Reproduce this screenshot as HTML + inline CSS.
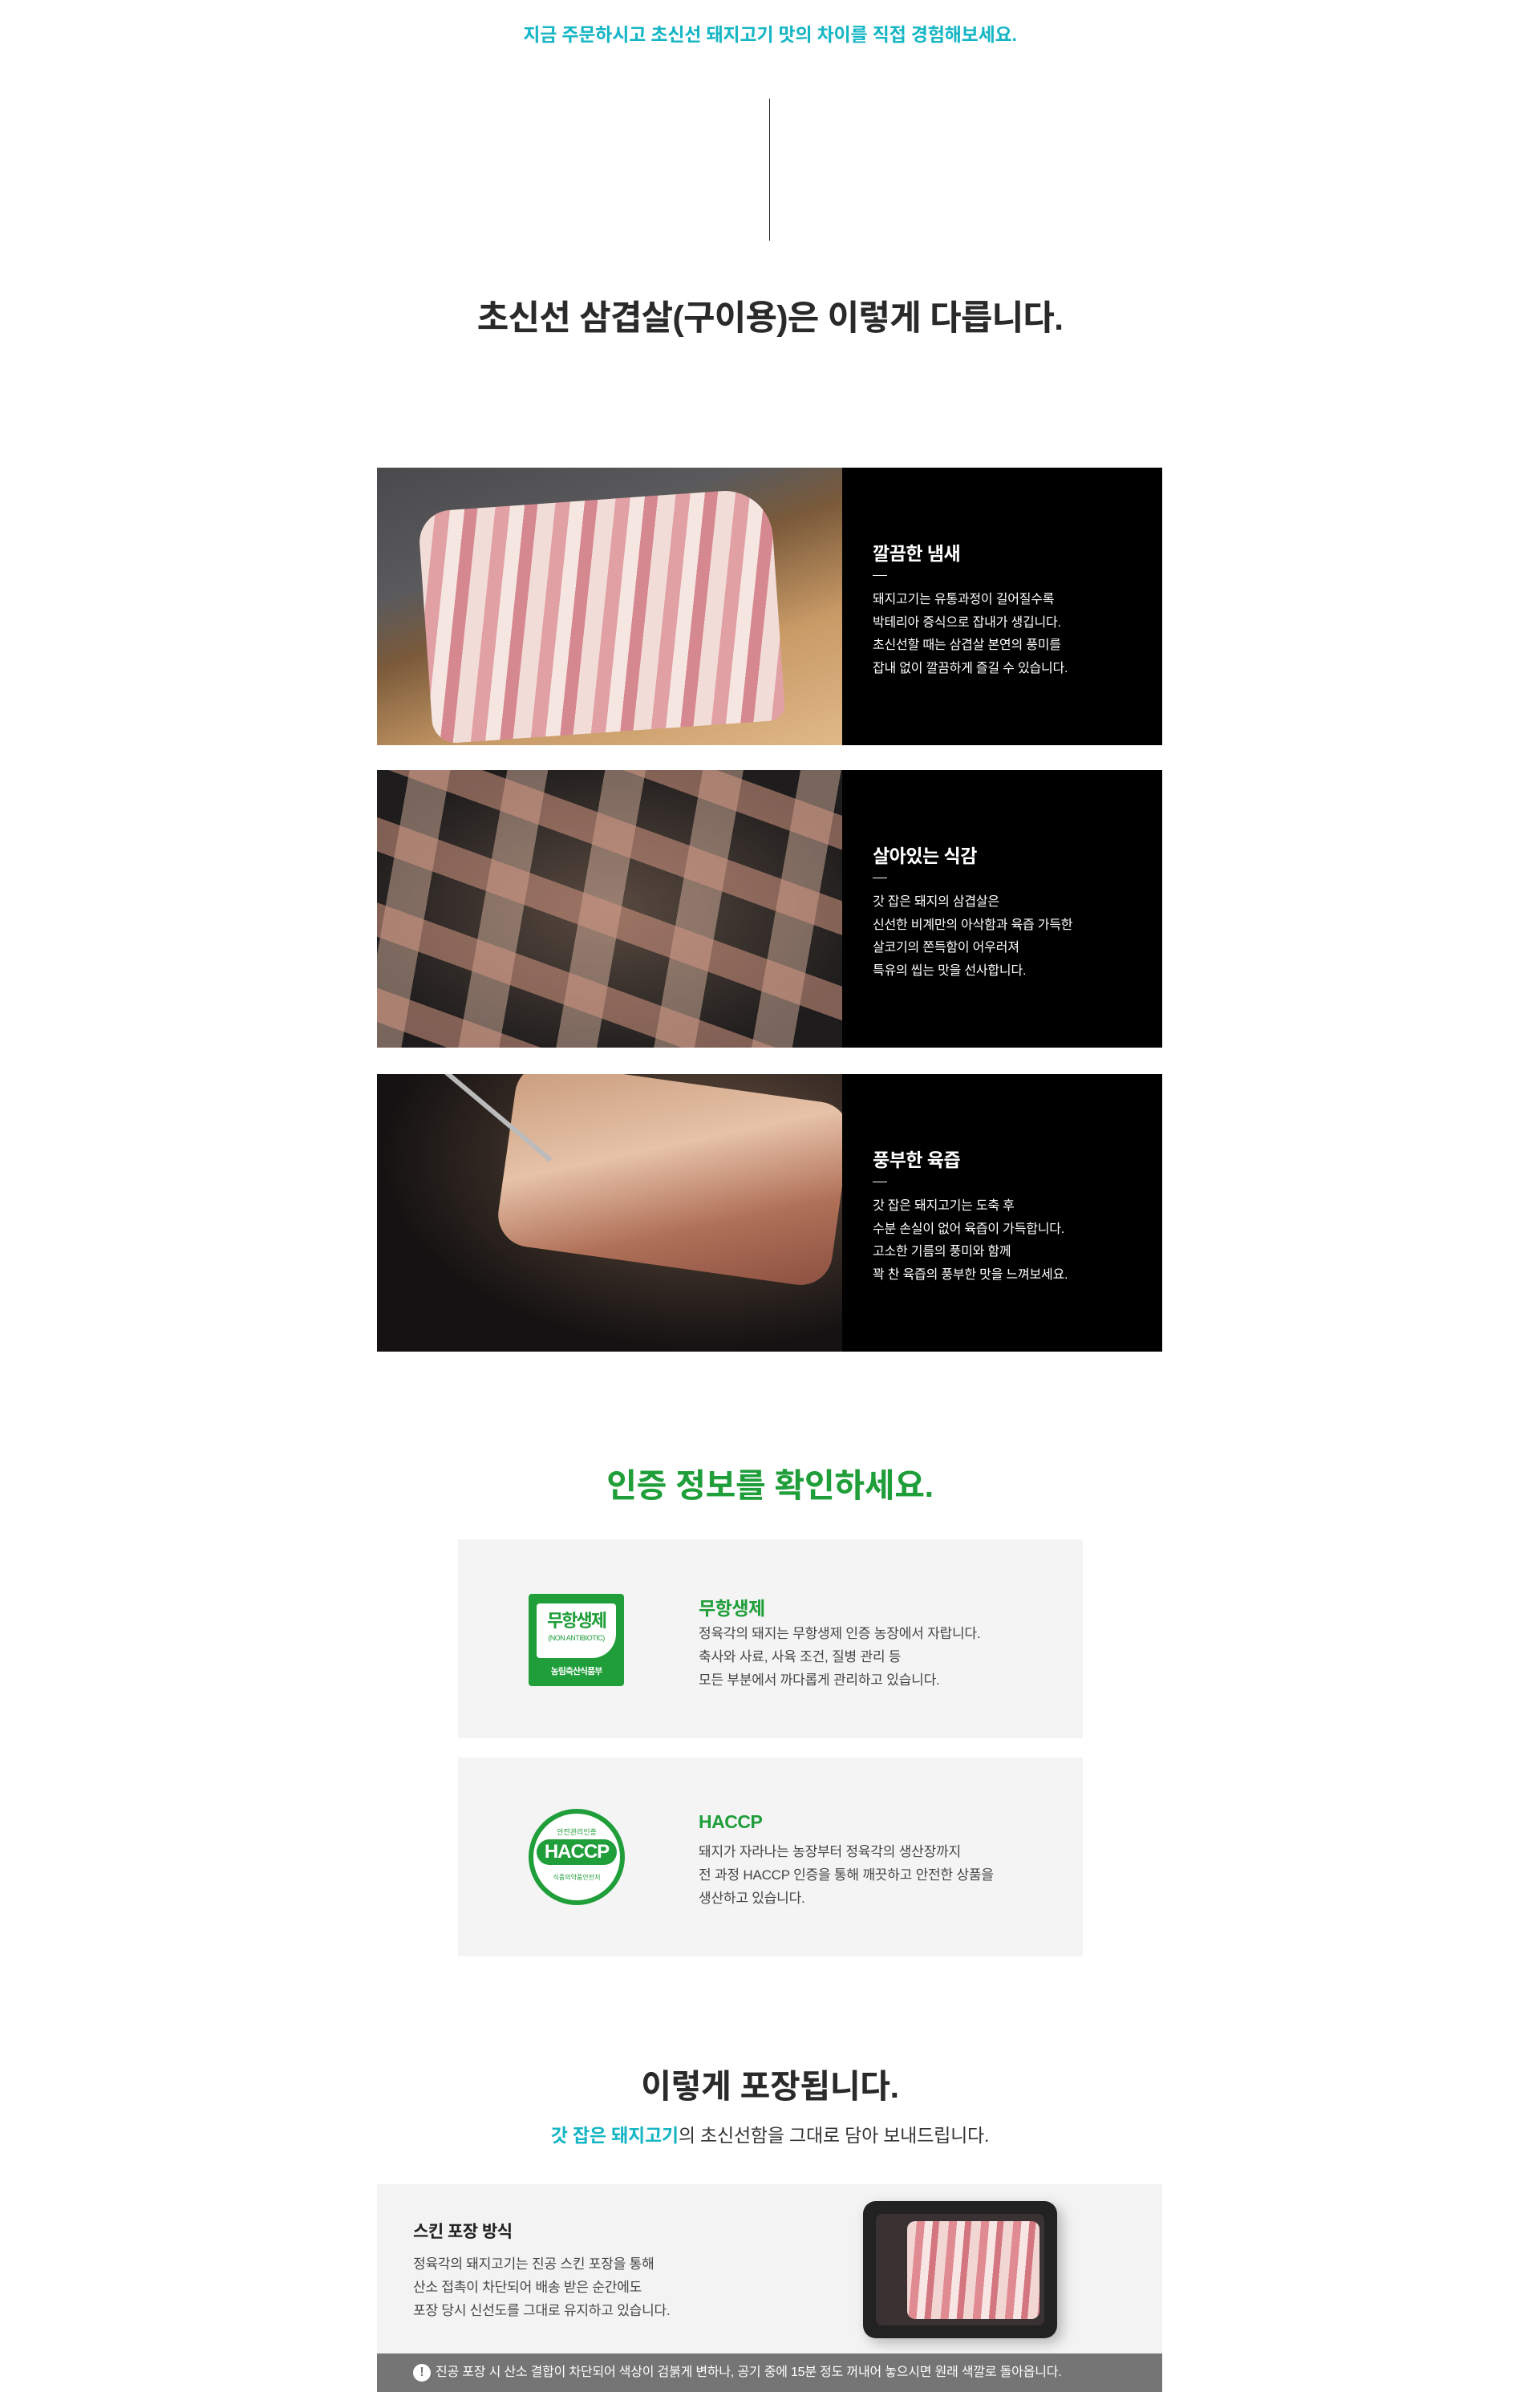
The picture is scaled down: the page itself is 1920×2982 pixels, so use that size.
<!DOCTYPE html>
<html><head><meta charset="utf-8"><style>
*{margin:0;padding:0;box-sizing:border-box}
body{width:1920px;height:2982px;background:#fff;font-family:"Liberation Sans","Noto Sans CJK KR",sans-serif;position:relative;overflow:hidden;color:#222}
.abs{position:absolute}
.c{left:0;width:1920px;text-align:center}
.row{position:absolute;left:470px;width:979px;height:346px;background:#000}
.ph{position:absolute;left:0;top:0;width:580px;height:346px;overflow:hidden}
.tx{position:absolute;left:618px;top:0;color:#fff}
.tx h3{position:absolute;top:88px;font-size:23px;font-weight:bold;white-space:nowrap;letter-spacing:-.5px}
.tx i{position:absolute;top:134px;left:0;width:18px;height:1px;background:#fff}
.tx p{position:absolute;top:151px;font-size:16px;line-height:28.5px;white-space:nowrap;letter-spacing:-.2px}
.cert{position:absolute;left:571px;width:779px;height:248px;background:#f4f4f4}
.cert h4{position:absolute;left:300px;top:67px;font-size:23px;color:#1f9e3a;letter-spacing:-.5px;font-weight:bold}
.cert p{position:absolute;left:300px;top:103px;font-size:17px;line-height:29px;color:#444;white-space:nowrap;letter-spacing:-.2px}
</style></head><body>
<div class="abs c" style="top:24px;font-size:23px;color:#17b6c4;font-weight:bold;letter-spacing:-.2px">지금 주문하시고 초신선 돼지고기 맛의 차이를 직접 경험해보세요.</div>
<div class="abs" style="left:959px;top:123px;width:1px;height:177px;background:#222"></div>
<div class="abs c" style="top:362px;font-size:43px;font-weight:bold;color:#2a2a2a;letter-spacing:-.8px">초신선 삼겹살(구이용)은 이렇게 다릅니다.</div>

<div class="row" style="top:583px">
 <div class="ph" style="background:linear-gradient(160deg,#4a4a4c 0%,#5a5a5c 30%,#7a5a3a 45%,#c89a66 70%,#e0b888 100%)">
  <div class="abs" style="left:60px;top:40px;width:440px;height:290px;border-radius:40px 60px 20px 30px;background:repeating-linear-gradient(100deg,#f2dcd8 0 22px,#e0a0a4 22px 40px,#f6e6e2 40px 58px,#d68890 58px 74px);transform:rotate(-4deg)"></div>
 </div>
 <div class="tx"><h3>깔끔한 냄새</h3><i></i><p>돼지고기는 유통과정이 길어질수록<br>박테리아 증식으로 잡내가 생깁니다.<br>초신선할 때는 삼겹살 본연의 풍미를<br>잡내 없이 깔끔하게 즐길 수 있습니다.</p></div>
</div>
<div class="row" style="top:960px">
 <div class="ph" style="background:radial-gradient(ellipse at 50% 50%,#5a4a40,#1e1c1c 80%)">
  <div class="abs" style="left:0;top:0;width:580px;height:346px;background:repeating-linear-gradient(20deg,transparent 0 30px,rgba(210,150,130,.55) 30px 70px,transparent 70px 100px),repeating-linear-gradient(100deg,transparent 0 40px,rgba(230,190,170,.45) 40px 90px,transparent 90px 120px)"></div>
 </div>
 <div class="tx"><h3>살아있는 식감</h3><i></i><p>갓 잡은 돼지의 삼겹살은<br>신선한 비계만의 아삭함과 육즙 가득한<br>살코기의 쫀득함이 어우러져<br>특유의 씹는 맛을 선사합니다.</p></div>
</div>
<div class="row" style="top:1339px">
 <div class="ph" style="background:radial-gradient(ellipse at 70% 30%,#6a5040,#141212 70%)">
  <div class="abs" style="left:160px;top:10px;width:420px;height:230px;border-radius:40px;background:linear-gradient(160deg,#c89a7a,#e6c2a8 40%,#b07058 70%,#8a5040);transform:rotate(8deg)"></div>
  <div class="abs" style="left:40px;top:40px;width:200px;height:6px;background:#bbb;transform:rotate(40deg)"></div>
 </div>
 <div class="tx"><h3>풍부한 육즙</h3><i></i><p>갓 잡은 돼지고기는 도축 후<br>수분 손실이 없어 육즙이 가득합니다.<br>고소한 기름의 풍미와 함께<br>꽉 찬 육즙의 풍부한 맛을 느껴보세요.</p></div>
</div>

<div class="abs c" style="top:1818px;font-size:41px;font-weight:bold;color:#1f9e3a;letter-spacing:-.3px">인증 정보를 확인하세요.</div>
<div class="cert" style="top:1919px">
 <div class="abs" style="left:88px;top:68px;width:119px;height:115px;background:#1f9e3a;border-radius:4px">
  <div class="abs" style="left:10px;top:12px;width:99px;height:68px;background:#fff;border-radius:4px 4px 30px 4px"></div>
  <div class="abs" style="left:0;width:119px;top:16px;text-align:center;color:#1f9e3a;font-size:22px;font-weight:bold;letter-spacing:-2px">무항생제</div>
  <div class="abs" style="left:0;width:119px;top:50px;text-align:center;color:#1f9e3a;font-size:9px;letter-spacing:-.5px">(NON ANTIBIOTIC)</div>
  <div class="abs" style="left:0;width:119px;top:88px;text-align:center;color:#fff;font-size:11px;font-weight:bold;letter-spacing:-1px">농림축산식품부</div>
 </div>
 <h4>무항생제</h4><p>정육각의 돼지는 무항생제 인증 농장에서 자랍니다.<br>축사와 사료, 사육 조건, 질병 관리 등<br>모든 부분에서 까다롭게 관리하고 있습니다.</p>
</div>
<div class="cert" style="top:2191px">
 <div class="abs" style="left:88px;top:64px;width:120px;height:120px;border-radius:50%;background:#1f9e3a">
  <div class="abs" style="left:6px;top:6px;width:108px;height:108px;border-radius:50%;background:#fff"></div>
  <div class="abs" style="left:0;width:120px;top:22px;text-align:center;color:#1f9e3a;font-size:9px">안전관리인증</div>
  <div class="abs" style="left:10px;width:100px;top:38px;height:32px;border-radius:16px;background:#1f9e3a;text-align:center;color:#fff;font-size:24px;font-weight:bold;line-height:32px;letter-spacing:-1px">HACCP</div>
  <div class="abs" style="left:0;width:120px;top:80px;text-align:center;color:#1f9e3a;font-size:8px">식품의약품안전처</div>
 </div>
 <h4>HACCP</h4><p>돼지가 자라나는 농장부터 정육각의 생산장까지<br>전 과정 HACCP 인증을 통해 깨끗하고 안전한 상품을<br>생산하고 있습니다.</p>
</div>

<div class="abs c" style="top:2567px;font-size:41px;font-weight:bold;color:#2a2a2a;letter-spacing:-.3px">이렇게 포장됩니다.</div>
<div class="abs c" style="top:2643px;font-size:23px;color:#333;letter-spacing:-.2px"><span style="color:#17b6c4;font-weight:bold">갓 잡은 돼지고기</span>의 초신선함을 그대로 담아 보내드립니다.</div>
<div class="abs" style="left:470px;top:2723px;width:979px;height:259px;background:#f3f3f3">
 <div class="abs" style="left:45px;top:43px;font-size:21px;font-weight:bold;color:#222;letter-spacing:-.5px">스킨 포장 방식</div>
 <div class="abs" style="left:45px;top:85px;font-size:17px;line-height:29px;color:#444;white-space:nowrap;letter-spacing:-.2px">정육각의 돼지고기는 진공 스킨 포장을 통해<br>산소 접촉이 차단되어 배송 받은 순간에도<br>포장 당시 신선도를 그대로 유지하고 있습니다.</div>
 <div class="abs" style="left:606px;top:21px;width:242px;height:171px;background:#222;border-radius:16px;box-shadow:6px 6px 16px rgba(0,0,0,.25)">
  <div class="abs" style="left:16px;top:16px;width:210px;height:139px;background:#3a3232;border-radius:8px"></div>
  <div class="abs" style="left:55px;top:25px;width:165px;height:122px;border-radius:10px;background:repeating-linear-gradient(95deg,#f2d6d4 0 12px,#e08a92 12px 22px,#f8e6e4 22px 32px,#d47680 32px 40px)"></div>
 </div>
 <div class="abs" style="left:0;top:211px;width:979px;height:48px;background:#757575;color:#fff;font-size:16px;line-height:48px;letter-spacing:-.2px;white-space:nowrap">
  <span style="display:inline-block;margin-left:45px;width:22px;height:22px;border-radius:50%;background:#fff;color:#757575;text-align:center;line-height:22px;font-weight:bold;vertical-align:middle;margin-right:6px">!</span>진공 포장 시 산소 결합이 차단되어 색상이 검붉게 변하나, 공기 중에 15분 정도 꺼내어 놓으시면 원래 색깔로 돌아옵니다.
 </div>
</div>
</body></html>
